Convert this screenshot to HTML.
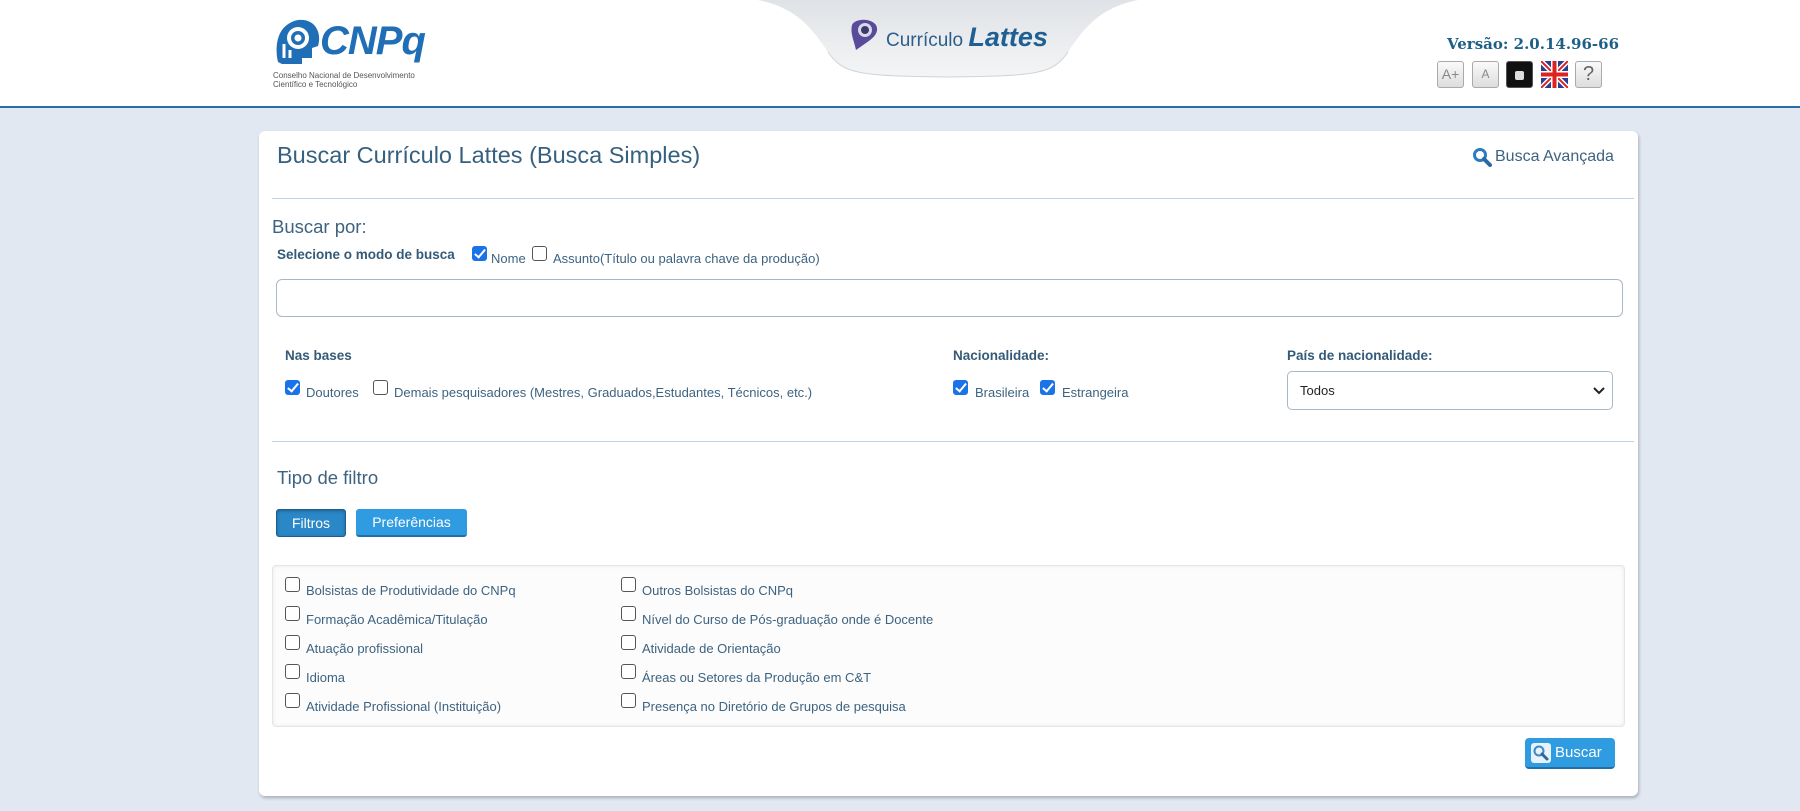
<!DOCTYPE html>
<html><head><meta charset="utf-8"><style>
*{box-sizing:border-box;margin:0;padding:0}
body{width:1800px;height:811px;overflow:hidden;background:#e1e8f1;font-family:"Liberation Sans",sans-serif;position:relative;color:#3a5f7c}
.a{position:absolute;white-space:nowrap}
#hdr{position:absolute;left:0;top:0;width:1800px;height:108px;background:#fff;border-bottom:2px solid #2b6ea5}
.cb{position:absolute;width:15px;height:15px;border:1.5px solid #555;border-radius:3px;background:#fff}
.cb.on{background:#1a73e8;border-color:#1a73e8}
.cb.on::after{content:"";position:absolute;left:4px;top:0px;width:4px;height:9px;border:solid #fff;border-width:0 2.5px 2.5px 0;transform:rotate(40deg)}
.t13{font-size:13px;color:#3d6380}
.b13{font-size:13.5px;font-weight:bold;color:#345a78}
.ib{position:absolute;top:61px;width:27px;height:27px;border:1px solid #aaa;border-radius:3px;background:linear-gradient(#fafafa,#ddd);font-size:14px;color:#888;text-align:center;line-height:25px}
.btn{position:absolute;background:#2f9be0;color:#fff;font-size:14px;text-align:center;border-radius:3px;border-bottom:2px solid #1f6fa8}
</style></head><body>
<div id="hdr"></div>
<svg class="a" style="left:272px;top:14px" width="52" height="52" viewBox="0 0 52 52">
<path d="M6 48 C2 30 6 10 26 6 C44 4 50 20 46 32 L40 34 L40 44 L30 44 L30 50 L10 50 Z" fill="#1f6eb6"/>
<circle cx="26" cy="24" r="11" fill="#fff"/><circle cx="26" cy="24" r="7" fill="#1f6eb6"/><circle cx="26" cy="24" r="3.5" fill="#fff"/>
<path d="M12 44 L12 30 M18 44 L18 36" stroke="#fff" stroke-width="3"/>
</svg>
<div class="a" style="left:320px;top:19px;font-size:40px;font-weight:bold;font-style:italic;color:#1f6eb6;letter-spacing:-1px">CNPq</div>
<div class="a" style="left:273px;top:71px;font-size:8px;color:#555;line-height:9px">Conselho Nacional de Desenvolvimento<br>Científico e Tecnológico</div>
<svg class="a" style="left:758px;top:0" width="380" height="80" viewBox="0 0 380 80">
<defs><linearGradient id="g" x1="0" y1="0" x2="0" y2="1"><stop offset="0" stop-color="#dfe2e6"/><stop offset="1" stop-color="#f4f5f6"/></linearGradient></defs>
<path d="M0 0 C40 8 55 30 70 52 C85 74 100 76 190 77 C280 76 295 74 310 52 C325 30 340 8 380 0 Z" fill="url(#g)"/>
<path d="M70 52 C85 74 100 76 190 77 C280 76 295 74 310 52" stroke="#d0d3d6" fill="none"/>
</svg>
<svg class="a" style="left:848px;top:17px" width="32" height="34" viewBox="0 0 32 34">
<path d="M4 8 C6 2 22 0 28 8 C32 16 24 22 18 26 L8 33 C6 24 2 16 4 8Z" fill="#5a4a9a"/>
<circle cx="17" cy="13" r="7" fill="#d8d8e8"/><circle cx="17" cy="13" r="4" fill="#3a3a70"/>
</svg>
<div class="a" style="left:886px;top:22px;font-size:19px;color:#2a5f8c">Currículo <span style="font-size:27px;font-weight:bold;font-style:italic;color:#1f5f94">Lattes</span></div>
<div class="a" style="left:1447px;top:35px;font-size:15px;font-weight:bold;color:#1e5f86;font-family:'DejaVu Serif',serif">Versão: 2.0.14.96-66</div>
<div class="ib" style="left:1437px">A+</div>
<div class="ib" style="left:1472px;font-size:12px">A</div>
<div class="ib" style="left:1506px;background:#111;border-color:#555"><span style="display:inline-block;width:9px;height:9px;border-radius:2px;background:#ddd;vertical-align:middle"></span></div>
<svg class="a" style="left:1541px;top:61px" width="27" height="27" viewBox="0 0 27 27"><rect width="27" height="27" rx="3" fill="#2a3f8f"/><path d="M0 0L27 27M27 0L0 27" stroke="#fff" stroke-width="5"/><path d="M0 0L27 27M27 0L0 27" stroke="#d22" stroke-width="2"/><path d="M13.5 0V27M0 13.5H27" stroke="#fff" stroke-width="7"/><path d="M13.5 0V27M0 13.5H27" stroke="#d22" stroke-width="4"/></svg>
<div class="ib" style="left:1575px;font-size:20px;color:#666">?</div>
<div class="a" style="left:259px;top:131px;width:1379px;height:665px;background:#fff;border-radius:6px;box-shadow:1px 2px 3px rgba(0,0,0,.25)"></div>
<div class="a" style="left:277px;top:142px;font-size:23.5px;color:#35607f">Buscar Currículo Lattes (Busca Simples)</div>
<svg class="a" style="left:1472px;top:147px" width="20" height="20" viewBox="0 0 20 20"><circle cx="8" cy="8" r="5.5" fill="none" stroke="#2b7bc0" stroke-width="3"/><path d="M12 12 L18 18" stroke="#2b6aa0" stroke-width="4" stroke-linecap="round"/></svg>
<div class="a" style="left:1495px;top:148px;font-size:16px;color:#3d6380">Busca Avançada</div>
<div class="a" style="left:272px;top:198px;width:1362px;height:1px;background:#c5d3de"></div>
<div class="a" style="left:272px;top:216px;font-size:18.5px;color:#3d6380">Buscar por:</div>
<div class="a b13" style="left:277px;top:247px">Selecione o modo de busca</div>
<div class="cb on" style="left:472px;top:246px"></div>
<div class="a t13" style="left:491px;top:251px">Nome</div>
<div class="cb" style="left:532px;top:246px"></div>
<div class="a t13" style="left:553px;top:251px">Assunto(Título ou palavra chave da produção)</div>
<div class="a" style="left:276px;top:279px;width:1347px;height:38px;border:1px solid #a9b8c6;border-radius:6px"></div>
<div class="a b13" style="left:285px;top:348px">Nas bases</div>
<div class="cb on" style="left:285px;top:380px"></div>
<div class="a t13" style="left:306px;top:385px">Doutores</div>
<div class="cb" style="left:373px;top:380px"></div>
<div class="a t13" style="left:394px;top:385px">Demais pesquisadores (Mestres, Graduados,Estudantes, Técnicos, etc.)</div>
<div class="a b13" style="left:953px;top:348px">Nacionalidade:</div>
<div class="cb on" style="left:953px;top:380px"></div>
<div class="a t13" style="left:975px;top:385px">Brasileira</div>
<div class="cb on" style="left:1040px;top:380px"></div>
<div class="a t13" style="left:1062px;top:385px">Estrangeira</div>
<div class="a b13" style="left:1287px;top:348px">País de nacionalidade:</div>
<div class="a" style="left:1287px;top:371px;width:326px;height:39px;border:1px solid #a9b8c6;border-radius:5px"></div>
<div class="a" style="left:1300px;top:383px;font-size:13px;color:#222">Todos</div>
<svg class="a" style="left:1593px;top:386px" width="12" height="10" viewBox="0 0 12 10"><path d="M1 2 L6 7 L11 2" stroke="#222" stroke-width="2" fill="none"/></svg>
<div class="a" style="left:272px;top:441px;width:1362px;height:1px;background:#c5d3de"></div>
<div class="a" style="left:277px;top:467px;font-size:18.5px;color:#3d6380">Tipo de filtro</div>
<div class="btn" style="left:276px;top:509px;width:70px;height:28px;line-height:26px;background:#2a87c8;border:1px solid #1e5f92;box-shadow:inset 0 1px 3px rgba(0,0,0,.3)">Filtros</div>
<div class="btn" style="left:356px;top:509px;width:111px;height:28px;line-height:26px">Preferências</div>
<div class="a" style="left:272px;top:565px;width:1353px;height:162px;background:#fcfcfc;border:1px solid #e6e6e6;border-radius:4px;box-shadow:inset 0 0 4px rgba(0,0,0,.08)"></div>
<div class="cb" style="left:285px;top:577px"></div><div class="a t13" style="left:306px;top:583px">Bolsistas de Produtividade do CNPq</div>
<div class="cb" style="left:285px;top:606px"></div><div class="a t13" style="left:306px;top:612px">Formação Acadêmica/Titulação</div>
<div class="cb" style="left:285px;top:635px"></div><div class="a t13" style="left:306px;top:641px">Atuação profissional</div>
<div class="cb" style="left:285px;top:664px"></div><div class="a t13" style="left:306px;top:670px">Idioma</div>
<div class="cb" style="left:285px;top:693px"></div><div class="a t13" style="left:306px;top:699px">Atividade Profissional (Instituição)</div>
<div class="cb" style="left:621px;top:577px"></div><div class="a t13" style="left:642px;top:583px">Outros Bolsistas do CNPq</div>
<div class="cb" style="left:621px;top:606px"></div><div class="a t13" style="left:642px;top:612px">Nível do Curso de Pós-graduação onde é Docente</div>
<div class="cb" style="left:621px;top:635px"></div><div class="a t13" style="left:642px;top:641px">Atividade de Orientação</div>
<div class="cb" style="left:621px;top:664px"></div><div class="a t13" style="left:642px;top:670px">Áreas ou Setores da Produção em C&amp;T</div>
<div class="cb" style="left:621px;top:693px"></div><div class="a t13" style="left:642px;top:699px">Presença no Diretório de Grupos de pesquisa</div>
<div class="btn" style="left:1525px;top:738px;width:90px;height:31px;line-height:29px;text-align:left;padding-left:30px;font-size:15px;border-radius:4px">Buscar</div>
<svg class="a" style="left:1531px;top:743px" width="20" height="20" viewBox="0 0 20 20"><rect width="20" height="20" rx="3" fill="#e8f2fa"/><circle cx="8" cy="8" r="4.5" fill="none" stroke="#3b88c4" stroke-width="2"/><path d="M11 11 L16 16" stroke="#2b6aa0" stroke-width="3" stroke-linecap="round"/></svg>
</body></html>
